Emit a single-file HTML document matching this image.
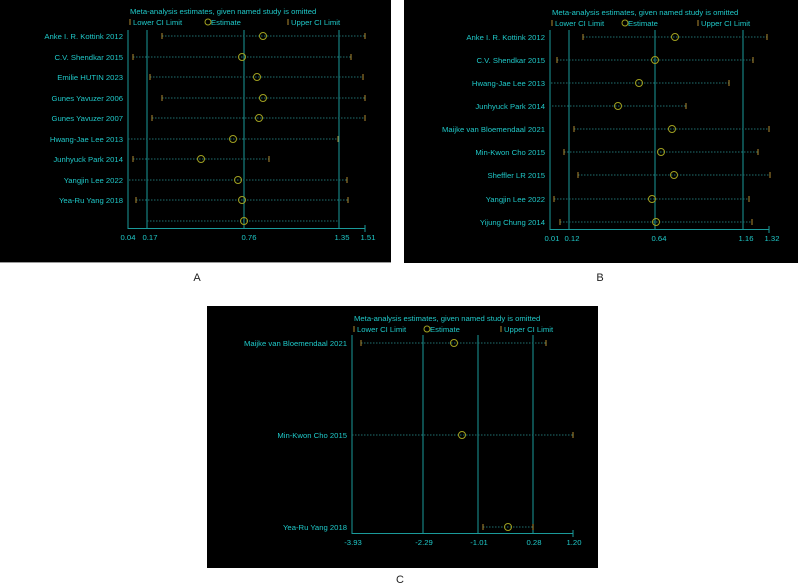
<!DOCTYPE html>
<html><head><meta charset="utf-8"><style>
html,body{margin:0;padding:0;background:#fff;width:798px;height:585px;overflow:hidden}
svg{display:block}
text{font-family:"Liberation Sans",sans-serif;fill:#1fc8c8;font-size:7.7px}
.lb{text-anchor:end}
.tk{text-anchor:middle}
.v{stroke:#1a9a9a;stroke-width:1}
.d{stroke:#1f6f6f;stroke-width:1;stroke-dasharray:1.5 1.5}
.c{fill:none;stroke:#a0a020;stroke-width:1}
.t{stroke:#b08a30;stroke-width:1}
.big{fill:#222;font-size:11px;text-anchor:middle}
</style></head><body>
<svg width="798" height="585" xmlns="http://www.w3.org/2000/svg">
<!-- Panel A -->
<rect x="0" y="0" width="391" height="262" fill="#000"/>
<line x1="0" y1="262.5" x2="391" y2="262.5" stroke="#999"/>
<text x="130" y="14">Meta-analysis estimates, given named study is omitted</text>
<line x1="130" y1="19" x2="130" y2="25" class="t"/><text x="133" y="25">Lower CI Limit</text>
<circle cx="208" cy="22" r="3" class="c"/><text x="211" y="25">Estimate</text>
<line x1="288" y1="19" x2="288" y2="25" class="t"/><text x="291" y="25">Upper CI Limit</text>
<line x1="128" y1="30" x2="128" y2="229" class="v"/>
<line x1="147" y1="30" x2="147" y2="229" class="v"/>
<line x1="244" y1="30" x2="244" y2="229" class="v"/>
<line x1="339" y1="30" x2="339" y2="229" class="v"/>
<line x1="128" y1="228.5" x2="365" y2="228.5" class="v"/>
<line x1="365" y1="225" x2="365" y2="232" class="v"/>
<g class="tk"><text x="128" y="240">0.04</text><text x="150" y="240">0.17</text><text x="249" y="240">0.76</text><text x="342" y="240">1.35</text><text x="368" y="240">1.51</text></g>
<g class="lb">
<text x="123" y="39">Anke I. R. Kottink 2012</text>
<text x="123" y="60">C.V. Shendkar 2015</text>
<text x="123" y="80">Emilie HUTIN 2023</text>
<text x="123" y="101">Gunes Yavuzer 2006</text>
<text x="123" y="121">Gunes Yavuzer 2007</text>
<text x="123" y="142">Hwang-Jae Lee 2013</text>
<text x="123" y="162">Junhyuck Park 2014</text>
<text x="123" y="183">Yangjin Lee 2022</text>
<text x="123" y="203">Yea-Ru Yang 2018</text>
</g>
<g>
<line x1="162" y1="36" x2="365" y2="36" class="d"/><line x1="162" y1="33" x2="162" y2="39" class="t"/><line x1="365" y1="33" x2="365" y2="39" class="t"/><circle cx="263" cy="36" r="3.5" class="c"/>
<line x1="133" y1="57" x2="351" y2="57" class="d"/><line x1="133" y1="54" x2="133" y2="60" class="t"/><line x1="351" y1="54" x2="351" y2="60" class="t"/><circle cx="242" cy="57" r="3.5" class="c"/>
<line x1="150" y1="77" x2="363" y2="77" class="d"/><line x1="150" y1="74" x2="150" y2="80" class="t"/><line x1="363" y1="74" x2="363" y2="80" class="t"/><circle cx="257" cy="77" r="3.5" class="c"/>
<line x1="162" y1="98" x2="365" y2="98" class="d"/><line x1="162" y1="95" x2="162" y2="101" class="t"/><line x1="365" y1="95" x2="365" y2="101" class="t"/><circle cx="263" cy="98" r="3.5" class="c"/>
<line x1="152" y1="118" x2="365" y2="118" class="d"/><line x1="152" y1="115" x2="152" y2="121" class="t"/><line x1="365" y1="115" x2="365" y2="121" class="t"/><circle cx="259" cy="118" r="3.5" class="c"/>
<line x1="128" y1="139" x2="338" y2="139" class="d"/><line x1="338" y1="136" x2="338" y2="142" class="t"/><circle cx="233" cy="139" r="3.5" class="c"/>
<line x1="133" y1="159" x2="269" y2="159" class="d"/><line x1="133" y1="156" x2="133" y2="162" class="t"/><line x1="269" y1="156" x2="269" y2="162" class="t"/><circle cx="201" cy="159" r="3.5" class="c"/>
<line x1="129" y1="180" x2="347" y2="180" class="d"/><line x1="347" y1="177" x2="347" y2="183" class="t"/><circle cx="238" cy="180" r="3.5" class="c"/>
<line x1="136" y1="200" x2="348" y2="200" class="d"/><line x1="136" y1="197" x2="136" y2="203" class="t"/><line x1="348" y1="197" x2="348" y2="203" class="t"/><circle cx="242" cy="200" r="3.5" class="c"/>
<line x1="147" y1="221" x2="339" y2="221" class="d"/><circle cx="244" cy="221" r="3.5" class="c"/>
</g>
<text x="197" y="281" class="big">A</text>

<!-- Panel B -->
<rect x="404" y="0" width="394" height="263" fill="#000"/>
<text x="552" y="15">Meta-analysis estimates, given named study is omitted</text>
<line x1="552" y1="20" x2="552" y2="26" class="t"/><text x="555" y="26">Lower CI Limit</text>
<circle cx="625" cy="23" r="3" class="c"/><text x="628" y="26">Estimate</text>
<line x1="698" y1="20" x2="698" y2="26" class="t"/><text x="701" y="26">Upper CI Limit</text>
<line x1="550" y1="30" x2="550" y2="230" class="v"/>
<line x1="569" y1="30" x2="569" y2="230" class="v"/>
<line x1="655" y1="30" x2="655" y2="230" class="v"/>
<line x1="743" y1="30" x2="743" y2="230" class="v"/>
<line x1="550" y1="229.5" x2="769" y2="229.5" class="v"/>
<line x1="769" y1="226" x2="769" y2="233" class="v"/>
<g class="tk"><text x="552" y="241">0.01</text><text x="572" y="241">0.12</text><text x="659" y="241">0.64</text><text x="746" y="241">1.16</text><text x="772" y="241">1.32</text></g>
<g class="lb">
<text x="545" y="40">Anke I. R. Kottink 2012</text>
<text x="545" y="63">C.V. Shendkar 2015</text>
<text x="545" y="86">Hwang-Jae Lee 2013</text>
<text x="545" y="109">Junhyuck Park 2014</text>
<text x="545" y="132">Maijke van Bloemendaal 2021</text>
<text x="545" y="155">Min-Kwon Cho 2015</text>
<text x="545" y="178">Sheffler LR 2015</text>
<text x="545" y="202">Yangjin Lee 2022</text>
<text x="545" y="225">Yijung Chung 2014</text>
</g>
<g>
<line x1="583" y1="37" x2="767" y2="37" class="d"/><line x1="583" y1="34" x2="583" y2="40" class="t"/><line x1="767" y1="34" x2="767" y2="40" class="t"/><circle cx="675" cy="37" r="3.5" class="c"/>
<line x1="557" y1="60" x2="753" y2="60" class="d"/><line x1="557" y1="57" x2="557" y2="63" class="t"/><line x1="753" y1="57" x2="753" y2="63" class="t"/><circle cx="655" cy="60" r="3.5" class="c"/>
<line x1="551" y1="83" x2="729" y2="83" class="d"/><line x1="729" y1="80" x2="729" y2="86" class="t"/><circle cx="639" cy="83" r="3.5" class="c"/>
<line x1="552" y1="106" x2="686" y2="106" class="d"/><line x1="686" y1="103" x2="686" y2="109" class="t"/><circle cx="618" cy="106" r="3.5" class="c"/>
<line x1="574" y1="129" x2="769" y2="129" class="d"/><line x1="574" y1="126" x2="574" y2="132" class="t"/><line x1="769" y1="126" x2="769" y2="132" class="t"/><circle cx="672" cy="129" r="3.5" class="c"/>
<line x1="564" y1="152" x2="758" y2="152" class="d"/><line x1="564" y1="149" x2="564" y2="155" class="t"/><line x1="758" y1="149" x2="758" y2="155" class="t"/><circle cx="661" cy="152" r="3.5" class="c"/>
<line x1="578" y1="175" x2="770" y2="175" class="d"/><line x1="578" y1="172" x2="578" y2="178" class="t"/><line x1="770" y1="172" x2="770" y2="178" class="t"/><circle cx="674" cy="175" r="3.5" class="c"/>
<line x1="554" y1="199" x2="749" y2="199" class="d"/><line x1="554" y1="196" x2="554" y2="202" class="t"/><line x1="749" y1="196" x2="749" y2="202" class="t"/><circle cx="652" cy="199" r="3.5" class="c"/>
<line x1="560" y1="222" x2="752" y2="222" class="d"/><line x1="560" y1="219" x2="560" y2="225" class="t"/><line x1="752" y1="219" x2="752" y2="225" class="t"/><circle cx="656" cy="222" r="3.5" class="c"/>
</g>
<text x="600" y="281" class="big">B</text>

<!-- Panel C -->
<rect x="207" y="306" width="391" height="262" fill="#000"/>
<text x="354" y="321">Meta-analysis estimates, given named study is omitted</text>
<line x1="354" y1="326" x2="354" y2="332" class="t"/><text x="357" y="332">Lower CI Limit</text>
<circle cx="427" cy="329" r="3" class="c"/><text x="430" y="332">Estimate</text>
<line x1="501" y1="326" x2="501" y2="332" class="t"/><text x="504" y="332">Upper CI Limit</text>
<line x1="352" y1="335" x2="352" y2="534" class="v"/>
<line x1="423" y1="335" x2="423" y2="534" class="v"/>
<line x1="478" y1="335" x2="478" y2="534" class="v"/>
<line x1="533" y1="335" x2="533" y2="534" class="v"/>
<line x1="352" y1="533.5" x2="573" y2="533.5" class="v"/>
<line x1="573" y1="530" x2="573" y2="537" class="v"/>
<g class="tk"><text x="353" y="545">-3.93</text><text x="424" y="545">-2.29</text><text x="479" y="545">-1.01</text><text x="534" y="545">0.28</text><text x="574" y="545">1.20</text></g>
<g class="lb">
<text x="347" y="346">Maijke van Bloemendaal 2021</text>
<text x="347" y="438">Min-Kwon Cho 2015</text>
<text x="347" y="530">Yea-Ru Yang 2018</text>
</g>
<line x1="361" y1="343" x2="546" y2="343" class="d"/><line x1="361" y1="340" x2="361" y2="346" class="t"/><line x1="546" y1="340" x2="546" y2="346" class="t"/><circle cx="454" cy="343" r="3.5" class="c"/>
<line x1="352" y1="435" x2="573" y2="435" class="d"/><line x1="573" y1="432" x2="573" y2="438" class="t"/><circle cx="462" cy="435" r="3.5" class="c"/>
<line x1="483" y1="527" x2="533" y2="527" class="d"/><line x1="483" y1="524" x2="483" y2="530" class="t"/><line x1="533" y1="524" x2="533" y2="530" class="t"/><circle cx="508" cy="527" r="3.5" class="c"/>
<text x="400" y="583" class="big">C</text>
</svg>
</body></html>
